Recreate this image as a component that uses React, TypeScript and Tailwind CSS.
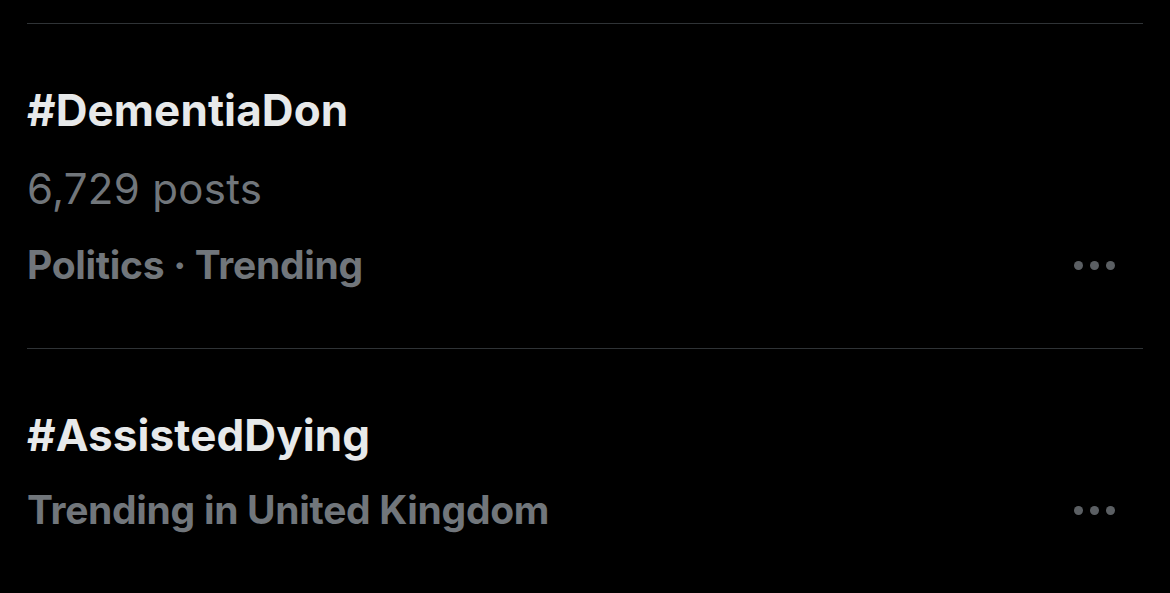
import React from 'react';

interface Trend {
  tag: string;
  posts?: string;
  meta: string;
}

const trends: Trend[] = [
  { tag: '#DementiaDon', posts: '6,729 posts', meta: 'Politics · Trending' },
  { tag: '#AssistedDying', meta: 'Trending in United Kingdom' },
];

function MoreDots() {
  return (
    <div className="flex items-center gap-[7px] mr-[28px] mt-[2px]">
      <span className="block h-[9px] w-[9px] rounded-full bg-[#5b5f63]" />
      <span className="block h-[9px] w-[9px] rounded-full bg-[#5b5f63]" />
      <span className="block h-[9px] w-[9px] rounded-full bg-[#5b5f63]" />
    </div>
  );
}

function TrendRow({ trend }: { trend: Trend }) {
  return (
    <div className="border-t border-[#2f3336] pt-[50px] pb-[46px]">
      <div className="text-[44px] leading-[72px] font-bold text-[#e7e9ea] tracking-[0.1px]">{trend.tag}</div>
      {trend.posts && (
        <div className="mt-[5px] text-[42px] leading-[75px] text-[#71767b] tracking-[0.3px]">{trend.posts}</div>
      )}
      <div className="flex items-center justify-between">
        <div className="mt-[1px] text-[39px] leading-[75px] font-bold text-[#71767b] tracking-[-0.3px]">{trend.meta}</div>
        <MoreDots />
      </div>
    </div>
  );
}

export default function App() {
  return (
    <div
      className="h-[593px] w-full overflow-hidden bg-black px-[27px] pt-[23px]"
      style={{ fontFamily: 'Inter, "Noto Sans", sans-serif' }}
    >
      {trends.map((t) => (
        <TrendRow key={t.tag} trend={t} />
      ))}
    </div>
  );
}
